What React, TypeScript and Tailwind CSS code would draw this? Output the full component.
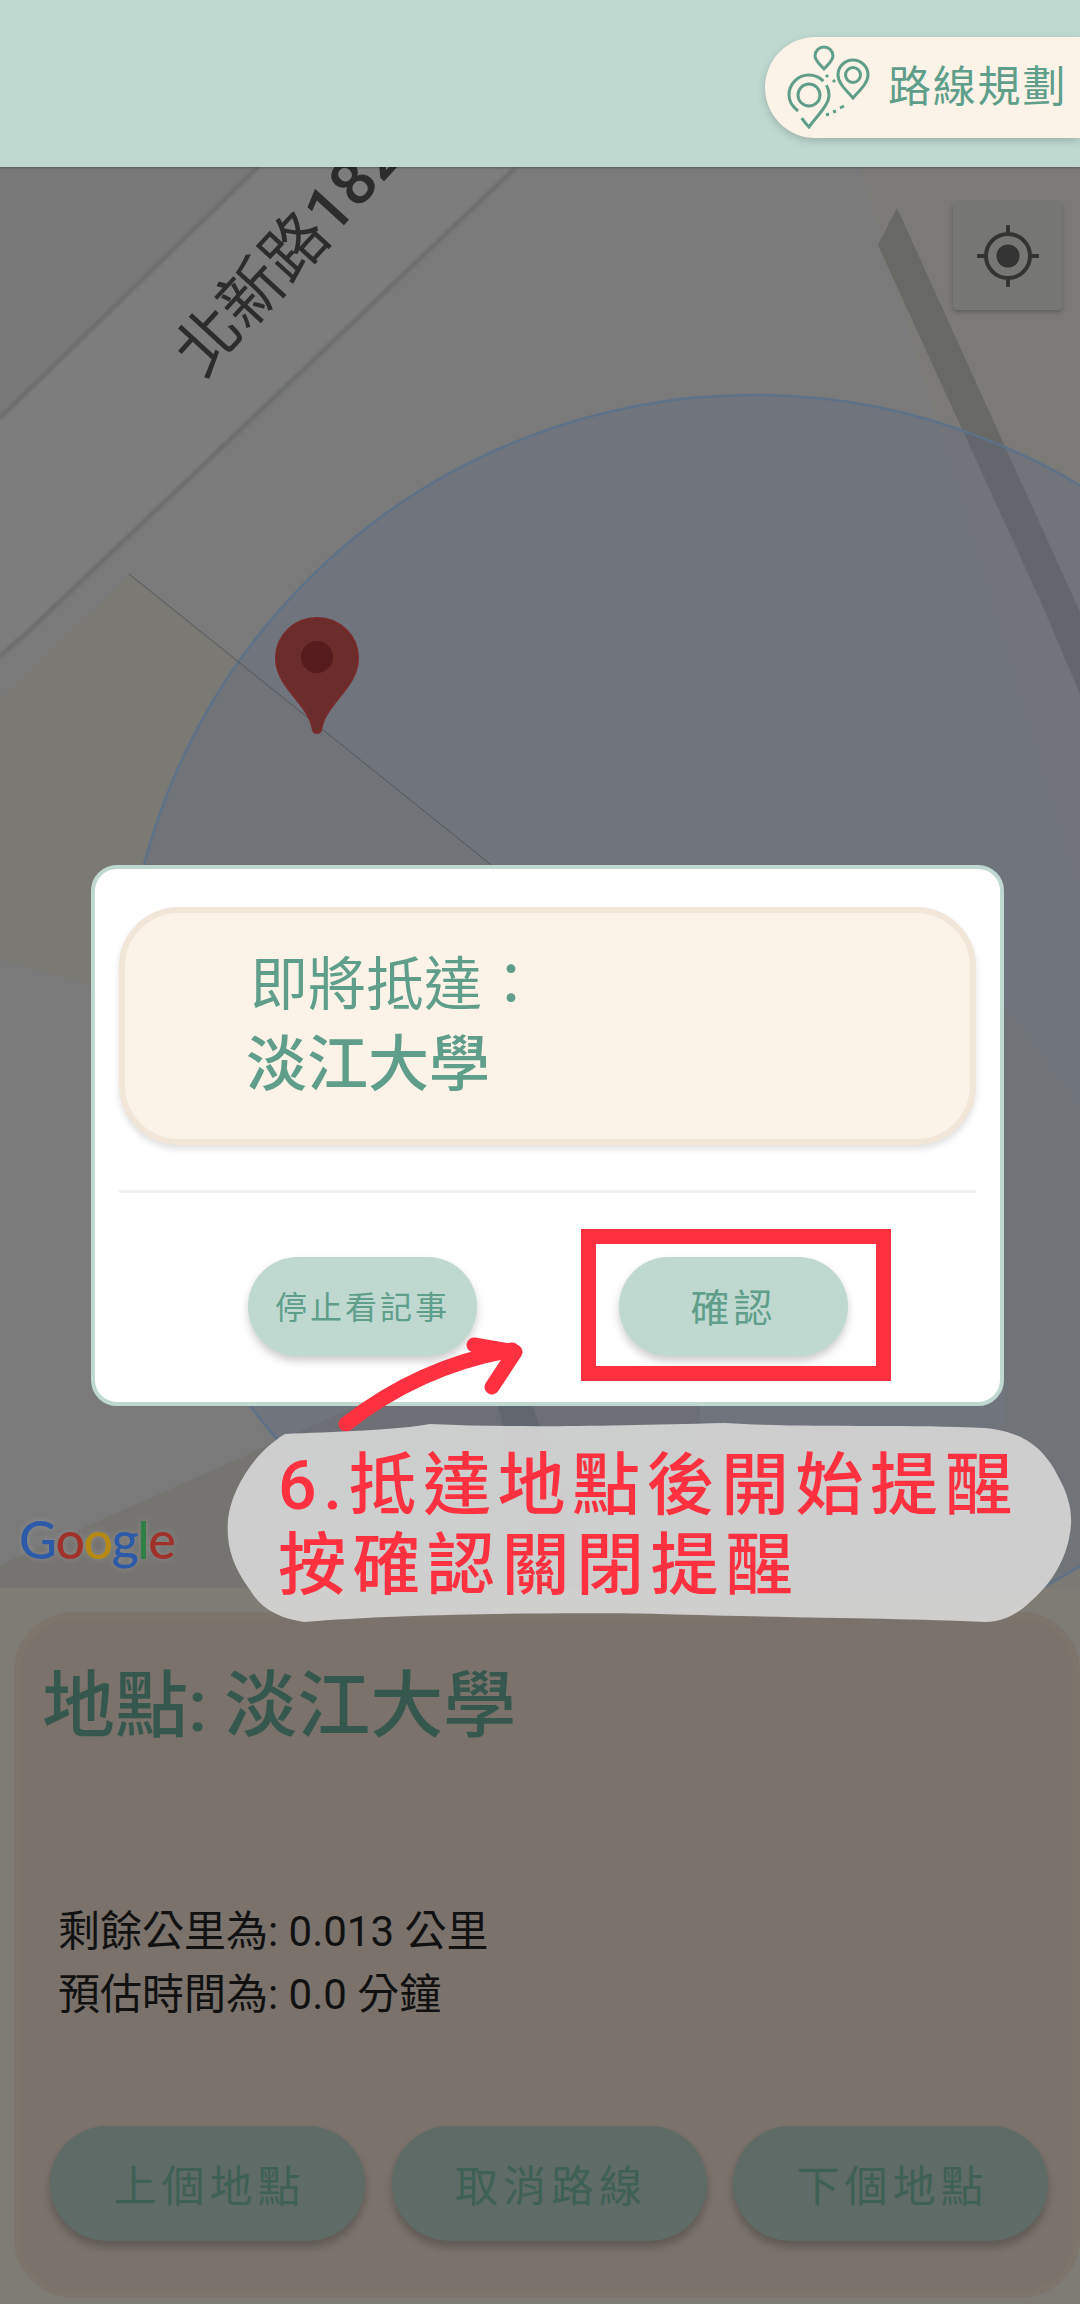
const CJK = { fontFamily: '"Roboto","Noto Sans CJK TC",sans-serif' };

function RouteIcon() {
  return (
    <svg width="112" height="96" viewBox="780 40 112 96" className="shrink-0" fill="none" stroke="#5f9e8a" strokeWidth="3">
      <path d="M824 47a9 9 0 0 1 9 9c0 4-5 9-9 13c-4-4-9-9-9-13a9 9 0 0 1 9-9z" />
      <path d="M853 60a15 15 0 0 1 15 15c0 8-8 15-15 23c-7-8-15-15-15-23a15 15 0 0 1 15-15z" />
      <circle cx="853" cy="75" r="7.5" />
      <path d="M798 111c-5-4-9-10-9-16a20 20 0 0 1 40 0c0 10-12 21-20 32c-3-3-6-7-8-10" strokeDasharray="66 5 60 5 6 4" />
      <circle cx="809" cy="95" r="11" />
      <path d="M826 75l2 2M833 80l2 2M826 115l3-1M833 112l3-1M840 108l4-2" />
    </svg>
  );
}

function LocateIcon() {
  return (
    <svg width="62" height="62" viewBox="0 0 62 62" fill="none" stroke="#333333" strokeWidth="4">
      <circle cx="31" cy="31" r="22" />
      <circle cx="31" cy="31" r="11.5" fill="#333333" stroke="none" />
      <path d="M31 0v9M31 53v9M0 31h9M53 31h9" />
    </svg>
  );
}

function MapDrawing() {
  return (
    <svg className="absolute inset-0 h-full w-full" viewBox="0 167 1080 1421" preserveAspectRatio="none">
      <defs>
        <filter id="soft"><feGaussianBlur stdDeviation="1.6" /></filter>
      </defs>
      <rect x="0" y="167" width="1080" height="1421" fill="#7a7a7a" />
      <path d="M0 418L258 167H516L0 656Z" fill="#7d7d7d" />
      <path d="M0 167H258L0 418Z" fill="#787878" />
      <path d="M0 418L258 167M0 656L30 630L516 167" stroke="#6b6c6c" strokeWidth="4" fill="none" filter="url(#soft)" />
      <path d="M600 167H1080V900L860 167Z" fill="#7b7a76" />
      <path d="M129 574L520 888L520 1100L0 960V700Z" fill="#7a7973" />
      <path d="M1004 1010L1015 1015L1080 1105V1588H1004Z" fill="#7a7973" />
      <path d="M348 1410L0 1565V1588H700V1400L400 1388Z" fill="#757470" />
      <path d="M897 208L1080 612V694L1040 600L878 245Z" fill="#686864" />
      <path d="M496 1400H530L600 1588H545Z" fill="#666766" />
      <circle cx="754" cy="1026" r="631" fill="#586684" fillOpacity="0.3" />
      <circle cx="754" cy="1026" r="631" fill="none" stroke="#5d7288" strokeWidth="2.5" />
      <path d="M129 574L520 888" stroke="#55585a" strokeWidth="1" />
      <text x="203" y="379" transform="rotate(-47.5 203 379)" fontSize="64" fill="#2c2c2c" style={{ fontFamily: '"Roboto","Noto Sans CJK TC",sans-serif' }}>
        北新路<tspan fontWeight="500">182</tspan>
      </text>
      <path d="M317 618c23 0 41 18 41 40c0 30-33 45-37 72c-1 4-7 4-8 0c-4-27-37-42-37-72c0-22 18-40 41-40z" fill="#6b2c2c" stroke="#782a2a" strokeWidth="2" />
      <circle cx="317" cy="657" r="16" fill="#561b1c" />
    </svg>
  );
}

function DialogButton({ children, className }: { children: React.ReactNode; className: string }) {
  return (
    <button className={`flex h-[99px] w-[229px] items-center justify-center rounded-[50px] bg-[#bfd9d1] text-[#5f9e8a] shadow-[0_5px_8px_rgba(0,0,0,0.2)] ${className}`}>
      {children}
    </button>
  );
}

function PanelButton({ label }: { label: string }) {
  return (
    <button className="flex h-[115px] w-[315px] items-center justify-center rounded-[58px] bg-[#5e6b66] pl-[4px] pt-[8px] text-[43px] tracking-[5px] text-[#3f6055] shadow-[0_6px_8px_rgba(0,0,0,0.22)]">
      {label}
    </button>
  );
}

export default function App() {
  return (
    <div className="relative flex h-[2304px] w-[1080px] flex-col overflow-hidden bg-[#7f7c76]" style={CJK}>
      <header className="z-10 flex h-[167px] shrink-0 justify-end bg-[#bfd9d1] pt-[37px] shadow-[0_1px_2px_rgba(0,0,0,0.25)]">
        <button className="flex h-[101px] w-[315px] items-center rounded-l-[52px] bg-[#fcf3e8] pl-[15px] shadow-[0_3px_8px_rgba(0,0,0,0.18)]">
          <RouteIcon />
          <span className="-ml-[4px] whitespace-nowrap text-[43px] leading-none tracking-[1.8px] text-[#5f9e8a]">路線規劃</span>
        </button>
      </header>

      <main className="relative flex-1 overflow-hidden">
        <MapDrawing />
        <div className="relative ml-auto mr-[18px] mt-[35px] flex h-[108px] w-[109px] items-center justify-center rounded-[4px] bg-[#767672] shadow-[0_2px_4px_rgba(0,0,0,0.25)]">
          <LocateIcon />
        </div>
        <div className="absolute bottom-[24px] left-[19px] flex h-[50px] items-center text-[52px] font-medium leading-none tracking-[-1.5px] [font-family:Lato,sans-serif] [text-shadow:0_0_6px_rgba(255,255,255,0.18)]">
          <span className="text-[#2d5aa8]">G</span>
          <span className="text-[#a0302a]">o</span>
          <span className="text-[#b68a12]">o</span>
          <span className="text-[#2d5aa8]">g</span>
          <span className="text-[#2f8044]">l</span>
          <span className="text-[#a0302a]">e</span>
        </div>
      </main>

      <section className="flex h-[716px] shrink-0 pl-[14px] pt-[24px] pb-[6px]">
        <div className="flex flex-1 flex-col rounded-[60px] border-[7px] border-[#7d746b] bg-[#7a726b] pl-[29px] pr-[25px]">
          <h1 className="-ml-[8px] mt-[42px] whitespace-nowrap text-[73px] font-medium leading-[90px] text-[#36574d]">
            地點:<span className="ml-[17px]">淡江大學</span>
          </h1>
          <div className="ml-[8px] mt-[149px] text-[42px] leading-[63px] text-[#111111]">
            <p>剩餘公里為: 0.013 公里</p>
            <p>預估時間為: 0.0 分鐘</p>
          </div>
          <div className="mt-[100px] flex justify-between">
            <PanelButton label="上個地點" />
            <PanelButton label="取消路線" />
            <PanelButton label="下個地點" />
          </div>
        </div>
      </section>

      <div className="absolute left-[91px] top-[865px] flex h-[541px] w-[913px] flex-col rounded-[26px] border-[4px] border-[#bfd9d1] bg-white px-[24px] pt-[38px]">
        <div className="h-[238px] rounded-[60px] border-[6px] border-[#f1e6d8] bg-[#fcf3e8] pl-[125px] pt-[34px] text-[#5f9e8a] shadow-[0_4px_6px_rgba(0,0,0,0.12)]">
          <p className="text-[58px] leading-[76px]">即將抵達：</p>
          <p className="-ml-[4px] mt-[2px] text-[61px] font-medium leading-[80px]">淡江大學</p>
        </div>
        <div className="mt-[45px] h-[3px] bg-[#f0f0f0]" />
        <div className="mt-[64px] flex pl-[129px]">
          <DialogButton className="pt-[2px] text-[32px] tracking-[3px]">停止看記事</DialogButton>
          <DialogButton className="ml-[142px] pt-[6px] text-[39px] tracking-[4px]">確認</DialogButton>
        </div>
      </div>

      <div className="absolute left-[581px] top-[1229px] h-[152px] w-[310px] border-[15px] border-[#ff3040]" />

      <svg className="absolute left-[320px] top-[1320px] h-[130px] w-[220px]" viewBox="320 1320 220 130" fill="none" stroke="#ff3040" strokeLinecap="round" strokeLinejoin="round">
        <path d="M346 1424Q420 1366 512 1350" strokeWidth="15" />
        <path d="M474 1345L515 1352L492 1387" strokeWidth="15" />
      </svg>

      <div className="absolute left-[227px] top-[1422px] h-[201px] w-[845px]">
        <svg className="absolute inset-0 h-full w-full" viewBox="227 1422 845 201" preserveAspectRatio="none">
          <path
            d="M285 1434C330 1432 400 1430 430 1424C520 1428 600 1426 725 1423C800 1428 900 1424 985 1428C1030 1432 1048 1455 1060 1480C1068 1495 1072 1510 1071 1525C1068 1560 1050 1585 1030 1602C1020 1612 1005 1622 985 1622C900 1618 800 1618 660 1614C560 1612 400 1614 304 1622C280 1618 262 1610 250 1590C232 1565 226 1545 228 1520C230 1495 250 1455 285 1434Z"
            fill="#d6d6d6"
            fillOpacity="0.92"
          />
        </svg>
        <div className="relative whitespace-nowrap pl-[51px] pt-[24px] text-[68px] font-medium leading-[80px] tracking-[6.5px] text-[#ff3040]">
          <p>6.抵達地點後開始提醒</p>
          <p>按確認關閉提醒</p>
        </div>
      </div>
    </div>
  );
}
